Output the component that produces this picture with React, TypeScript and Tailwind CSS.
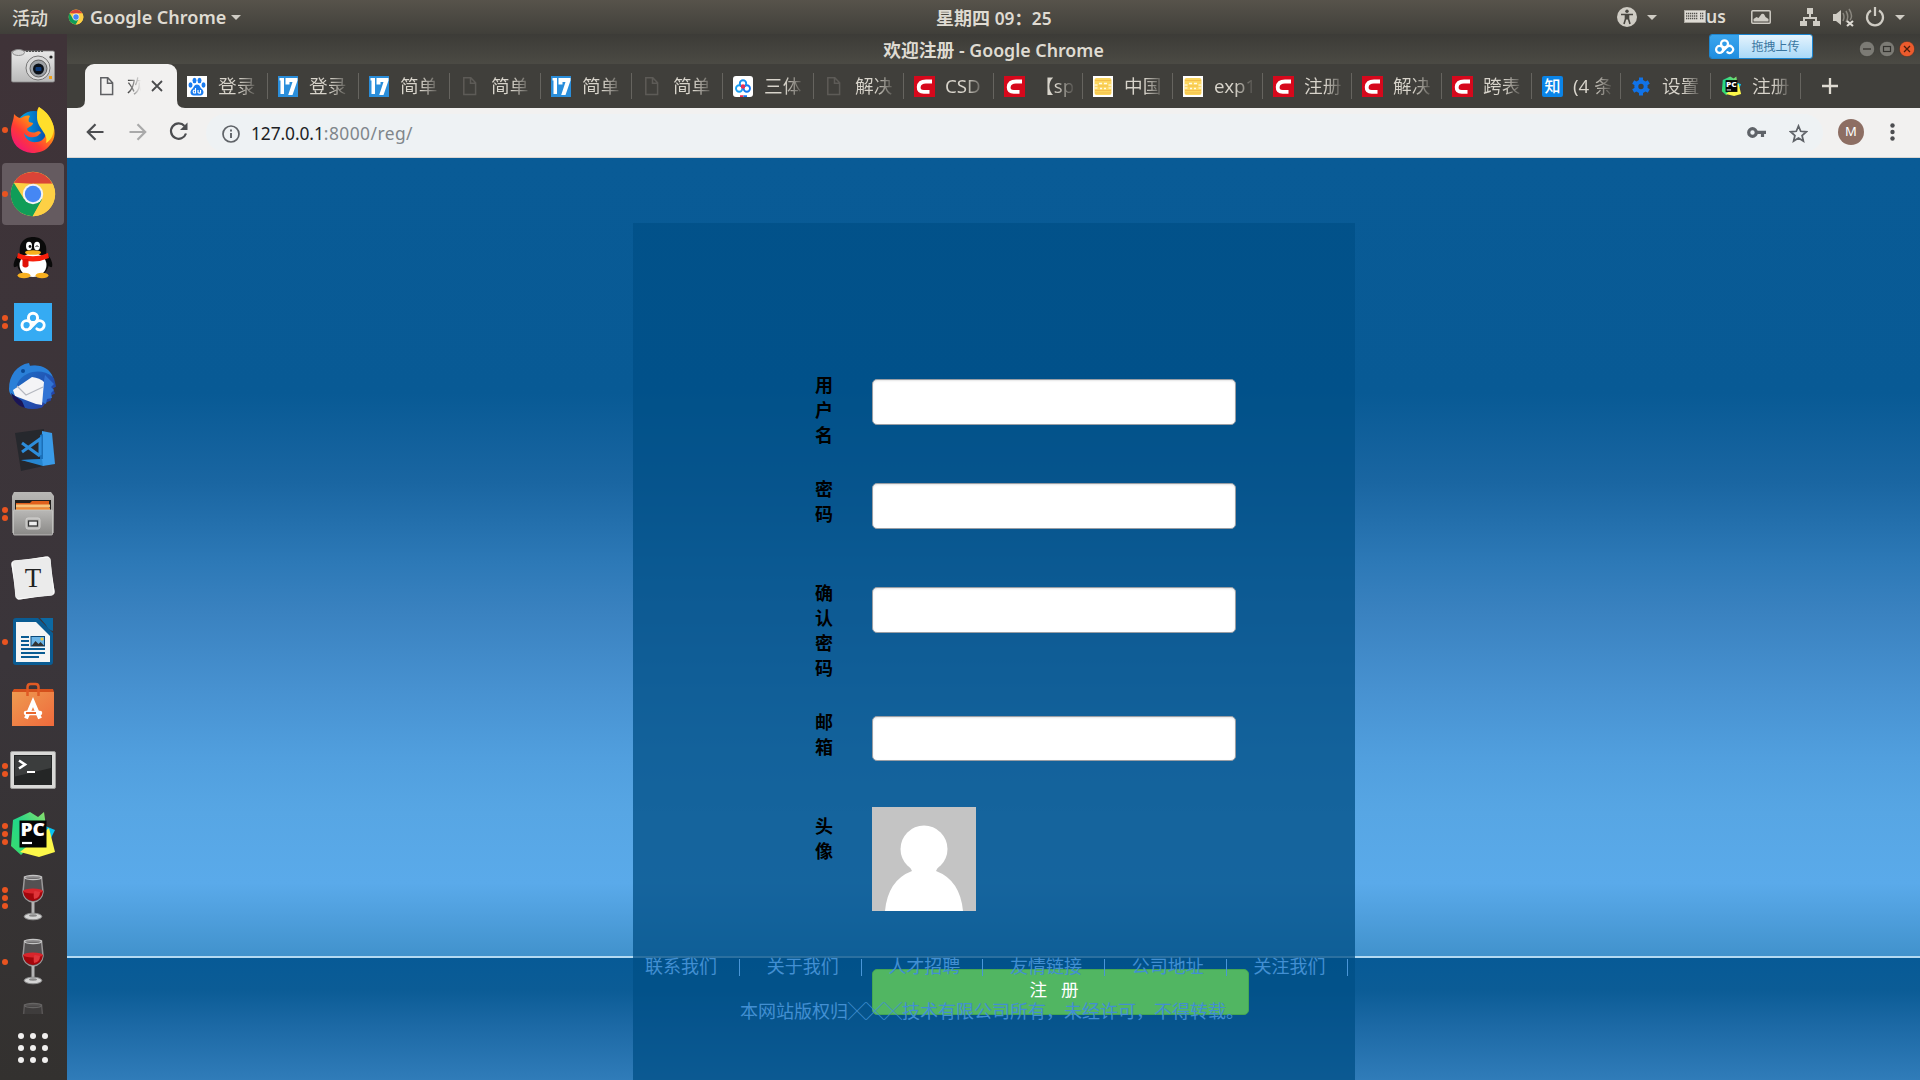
import React from 'react';

const UI = "font-['Noto_Sans','Noto_Sans_CJK_SC',sans-serif]";

/* ---------- small shared glyphs ---------- */

function Caret({ className = '' }: { className?: string }) {
  return (
    <svg className={'h-[5px] w-[10px] shrink-0 ' + className} viewBox="0 0 10 5">
      <path d="M0 0h10L5 5z" fill="#cfccc4" />
    </svg>
  );
}

function ChromeLogo({ className }: { className: string }) {
  return (
    <svg className={className} viewBox="0 0 48 48">
      <circle cx="24" cy="24" r="22.2" fill="#fdd045" />
      <path d="M4.8 12.8A22.2 22.2 0 0 1 43.4 13.8H24z" fill="#da4437" />
      <path d="M4.8 12.8A22.2 22.2 0 0 0 23.6 46.2L33 29.5 24 24 15 29z" fill="#109d58" />
      <path d="M24 46.2A22.2 22.2 0 0 0 43.6 13.8H24L33.5 29.3z" fill="#fdd045" />
      <circle cx="24" cy="24" r="10.2" fill="#f3f3f3" />
      <circle cx="24" cy="24" r="8.2" fill="#4587f4" />
    </svg>
  );
}

function Cloud({ className, color = '#fff' }: { className: string; color?: string }) {
  return (
    <svg className={className} viewBox="0 0 30 24" fill="none" stroke={color} strokeWidth="3.2" strokeLinecap="round">
      <circle cx="15" cy="7.5" r="5" />
      <circle cx="8" cy="15.5" r="5" />
      <path d="M11.5 19 18.6 12a5 5 0 1 1 .6 7.5" />
    </svg>
  );
}

/* ---------- dock ---------- */

function Camera() {
  return (
    <svg className="h-12 w-12" viewBox="0 0 48 48">
      <defs>
        <linearGradient id="cam" x1="0" y1="0" x2="0" y2="1">
          <stop offset="0" stopColor="#e9e9e9" />
          <stop offset="1" stopColor="#b9b9b9" />
        </linearGradient>
      </defs>
      <rect x="2.5" y="9" width="43" height="31" rx="1.5" fill="url(#cam)" stroke="#8d8d8d" strokeWidth=".8" />
      <path d="M17 9h17" stroke="#555" strokeWidth="2" strokeDasharray="2 1" />
      <ellipse cx="9.5" cy="10.5" rx="6" ry="3" fill="#d6d6d6" stroke="#8b8b8b" />
      <circle cx="29" cy="26" r="12" fill="#dadada" stroke="#777" />
      <circle cx="29.5" cy="26.5" r="8.5" fill="#9ea2a6" stroke="#5f5f5f" />
      <circle cx="29.5" cy="27" r="5.5" fill="#0a1018" />
      <rect x="26.5" y="25" width="6" height="4" rx="1" fill="#0d3a78" />
      <circle cx="42" cy="15" r="1.6" fill="#222" />
      <rect x="40" y="34" width="3" height="3" fill="#f0a018" />
    </svg>
  );
}

function Firefox() {
  return (
    <svg className="h-12 w-12" viewBox="0 0 48 48">
      <defs>
        <linearGradient id="ffa" x1="1" y1="0" x2="0.2" y2="1">
          <stop offset="0" stopColor="#ffe82c" />
          <stop offset=".4" stopColor="#ff9a10" />
          <stop offset=".7" stopColor="#ff3b35" />
          <stop offset="1" stopColor="#f2127c" />
        </linearGradient>
        <linearGradient id="ffb" x1="0" y1="0" x2="1" y2="0">
          <stop offset="0" stopColor="#00b4f0" />
          <stop offset="1" stopColor="#0a3aa0" />
        </linearGradient>
      </defs>
      <circle cx="25" cy="23" r="18" fill="url(#ffb)" />
      <path
        d="M5 8c2 2 4 4 7 4 3-2 6-3 9-2-1 2-2 4-1 6l4 1c0 3-5 4-6 6 1 4 7 4 9 3 2-1 4-1 5 1-2 1-3 4-7 4-5 1-8-1-10-4 1 6 6 10 13 9 7-1 10-7 9-13-1-6-9-9-9-16 0-3 1-5 2-6 3 3 9 6 12 13 5 9 5 19-1 25-4 6-11 8-18 8C10 46 2 37 2 25 2 18 5 14 5 8z"
        fill="url(#ffa)"
      />
      <path d="M30 1c7 4 14 12 15 22-1 8-4 12-8 14 3-10-9-14-9-26 0-4 1-8 2-10z" fill="#ffdf2b" />
    </svg>
  );
}

function Penguin() {
  return (
    <svg className="h-12 w-12" viewBox="0 0 48 48">
      <path d="M10 20c-5 5-6 11-5 13 2 1 5-3 5-3M38 20c5 5 6 11 5 13-2 1-5-3-5-3" fill="#0a0a0a" />
      <ellipse cx="24" cy="29" rx="16" ry="14" fill="#0a0a0a" />
      <path d="M11 20C9 7 17 3 24 3s15 4 13 17z" fill="#0a0a0a" />
      <ellipse cx="24" cy="31" rx="13.5" ry="12" fill="#fff" />
      <ellipse cx="15" cy="41.500" rx="6.500" ry="2.800" fill="#f8b01e" />
      <ellipse cx="33" cy="41.500" rx="6.500" ry="2.800" fill="#f8b01e" />
      <ellipse cx="20" cy="12" rx="3" ry="4.200" fill="#fff" />
      <ellipse cx="28" cy="12" rx="3" ry="4.200" fill="#fff" />
      <circle cx="21" cy="12.500" r="1.400" fill="#111" />
      <path d="M26.500 13q1.500-3 3 0" stroke="#111" fill="none" />
      <ellipse cx="24" cy="18.500" rx="8" ry="2.300" fill="#f8b01e" />
      <path d="M9 19q15 6.500 30 0l1 5q-16 7-32 0z" fill="#f8200c" />
      <path d="M13.500 25h6v7q-3 3-6 0z" fill="#e01006" />
    </svg>
  );
}

function BaiduDisk() {
  return (
    <div className="flex h-[38px] w-[38px] items-center justify-center bg-[#35abf3]">
      <Cloud className="h-[22px] w-[28px]" />
    </div>
  );
}

function Thunderbird() {
  return (
    <svg className="h-12 w-12" viewBox="0 0 48 48">
      <defs>
        <linearGradient id="tb" x1="0" y1="0" x2="1" y2="1">
          <stop offset="0" stopColor="#1c78d0" />
          <stop offset="1" stopColor="#26389c" />
        </linearGradient>
      </defs>
      <path d="M25 3.500q14 1 20 13l2 8-3 2 2 5-4 2 0 5-5 2-4 5q-10 3-18 0Q1 38 1 24 3 8 17 4z" fill="url(#tb)" />
      <path d="M0 27C0 13 8 3 20 1l1 3c11-2 19 2 23 11-8-6-17-7-26-3C9 16 5 25 7 36 2 34 0 31 0 27z" fill="#2a80d8" />
      <path d="m36 13 9 9-3 3 3 3-3 3 1 5-5 1-1 5-6-3z" fill="#3173d4" />
      <path d="M4 28 23 15q8 1 12 5l-2 23-6-1L6 34z" fill="#f4f4f6" />
      <path d="m8 24 9 9 17-8" fill="none" stroke="#b5b8c0" strokeWidth="1.200" />
      <path d="M2 31l11 8 3 7C9 44 4 39 2 31z" fill="#1a1556" />
      <circle cx="14" cy="9" r="2" fill="#0a4a98" />
    </svg>
  );
}

function VSCode() {
  return (
    <svg className="h-12 w-12" viewBox="0 0 48 48">
      <path d="M6 7 35 3v34l9 1-32 7z" fill="#26282d" />
      <path d="M33 5l10 2 3 31-12 2-2-2z" fill="#3a9be8" />
      <path d="M12 34l22-1V8l-3 1v25l1 4z" fill="#1b6fb8" />
      <path d="m12 34 21-1 1 7z" fill="#2686d0" />
      <path d="m13 17 18 13M13 26l18-13v16" fill="none" stroke="#2d8ddb" strokeWidth="3" />
    </svg>
  );
}

function Files() {
  return (
    <svg className="h-12 w-12" viewBox="0 0 48 48">
      <defs>
        <linearGradient id="fl" x1="0" y1="0" x2="0" y2="1">
          <stop offset="0" stopColor="#b9b8b6" />
          <stop offset="1" stopColor="#8a8987" />
        </linearGradient>
      </defs>
      <path d="M5 2h37l3 4v37H3V6z" fill="url(#fl)" />
      <rect x="6" y="10" width="36" height="12" fill="#22201e" />
      <path d="M7 13h14l2-2h17v10H7z" fill="#e0601c" />
      <path d="M7 14.500h34v3H7z" fill="#f6c37a" />
      <path d="M7 18h34v4H7z" fill="#f08a32" />
      <rect x="4.500" y="20" width="39" height="25" rx="1" fill="url(#fl)" stroke="#c9c8c6" strokeWidth=".8" />
      <rect x="17" y="28" width="14" height="11" rx="2" fill="#bdbcba" stroke="#d3d2d0" />
      <rect x="19.500" y="31" width="9" height="5" fill="#eee" stroke="#333" strokeWidth="1.300" />
    </svg>
  );
}

function Typora() {
  return (
    <svg className="h-12 w-12" viewBox="0 0 48 48">
      <rect x="5" y="5" width="38" height="38" rx="3" fill="#d9d9d9" transform="rotate(-10 24 24)" />
      <rect x="4.500" y="4.500" width="39" height="39" rx="3" fill="#fafafa" transform="rotate(-8 24 24)" />
      <rect x="5" y="5" width="38" height="38" rx="2" fill="#ebebeb" transform="rotate(-4 24 24)" />
      <text x="24" y="33" textAnchor="middle" fontFamily="Liberation Serif" fontSize="27" fill="#222">T</text>
    </svg>
  );
}

function Writer() {
  return (
    <svg className="h-12 w-12" viewBox="0 0 48 48">
      <path d="M7 0h22l15 15v29q0 3-3 3H7q-3 0-3-3V3q0-3 3-3z" fill="#0a5c93" />
      <path d="M31 0h13v13q-5-1-7-6z" fill="#0c69a3" />
      <path d="M7 4h20l14 14v26H7z" fill="#f5f5f5" />
      <path d="M12 19h8M12 23h8M12 27h8M12 31h24M12 35h24M12 39h18" stroke="#0a5c93" strokeWidth="2" />
      <rect x="22" y="18.500" width="13.500" height="9.500" fill="#6db5e6" stroke="#0a4a7c" />
      <path d="M22.500 28l4-5 3 3 2-2 4 4z" fill="#333" />
      <circle cx="33" cy="21" r="1.500" fill="#f6c83a" />
    </svg>
  );
}

function Software() {
  return (
    <svg className="h-12 w-12" viewBox="0 0 48 48">
      <defs>
        <linearGradient id="sw" x1="0" y1="0" x2="1" y2="1">
          <stop offset="0" stopColor="#ee9a50" />
          <stop offset="1" stopColor="#ef6a3c" />
        </linearGradient>
      </defs>
      <path d="M3 10h42v34H3z" fill="url(#sw)" />
      <path d="M3 10h42l-1-3H5z" fill="#d4501c" />
      <path d="M18.500 14V5q0-3 3-3h5q3 0 3 3v9" fill="none" stroke="#e05a24" strokeWidth="2.500" />
      <path d="M17 36.500 24 20l7 16.500" fill="none" stroke="#fff" strokeWidth="4" />
      <path d="M17 31h14" stroke="#fff" strokeWidth="4.500" strokeLinecap="round" />
      <path d="M17 31h10" stroke="#e9682f" strokeWidth="2" />
    </svg>
  );
}

function Terminal() {
  return (
    <svg className="h-12 w-12" viewBox="0 0 48 48">
      <rect x="1.500" y="5.500" width="45" height="37" rx="1.500" fill="#d9d9d7" stroke="#9c9c9a" />
      <rect x="5" y="9" width="38" height="30" fill="#242626" />
      <path d="M6 10h36v12L6 30.500z" fill="#3b3d3d" />
      <path d="m10 14.500 6 4-6 4" fill="none" stroke="#fff" strokeWidth="2.600" />
      <path d="M18 26h8" stroke="#fff" strokeWidth="2" />
    </svg>
  );
}

function PyCharm({ className }: { className: string }) {
  return (
    <svg className={className} viewBox="0 0 48 48">
      <defs>
        <linearGradient id="pc" x1="1" y1="0" x2="0" y2="1">
          <stop offset="0" stopColor="#8ee06a" />
          <stop offset=".5" stopColor="#21d789" />
          <stop offset="1" stopColor="#3ddb6b" />
        </linearGradient>
      </defs>
      <path d="M29 13 46 20l-6 12-12-4z" fill="#07c3f2" />
      <path d="M4 10 21 2l8 5 6-5 2 14-20 24-5 5L2 36z" fill="url(#pc)" />
      <path d="M40 18l6 24-16 5-19-5 10-8z" fill="#fcf84a" />
      <rect x="10.500" y="10.500" width="27" height="27" fill="#050505" />
      <text
        x="11.500"
        y="25.500"
        fontFamily="Open Sans"
        fontWeight="800"
        fontSize="17"
        textLength="24.500"
        lengthAdjust="spacingAndGlyphs"
        fill="#fff"
      >
        PC
      </text>
      <path d="M13 33h10" stroke="#fff" strokeWidth="2.200" />
    </svg>
  );
}

function Wine() {
  return (
    <svg className="h-12 w-12" viewBox="0 0 48 48">
      <path d="M15.500 3 14 18q1 9 10 10 9-1 10-10L32.500 3z" fill="#6c6a6b" fillOpacity=".55" stroke="#9b9899" strokeWidth="1.500" />
      <path d="M14 17h20q-1 9-10 10-9-1-10-10z" fill="#a3060c" />
      <ellipse cx="24" cy="17" rx="9.800" ry="2.500" fill="#d8252b" />
      <path d="M26 17q-2 0-1 8 6-1 6-7z" fill="#e0353a" />
      <ellipse cx="24" cy="3.500" rx="8.500" ry="2" fill="none" stroke="#c4c4c4" strokeWidth="1.300" />
      <path d="M24 28v12" stroke="#b4b4b4" strokeWidth="3" />
      <ellipse cx="24" cy="42.500" rx="8.800" ry="3.300" fill="#d5d5d5" stroke="#8e8e8e" />
      <ellipse cx="24" cy="41.500" rx="4" ry="1.200" fill="#888" />
    </svg>
  );
}

const dock: { icon: React.ReactNode; dots: number; active?: boolean }[] = [
  { icon: <Camera />, dots: 0 },
  { icon: <Firefox />, dots: 1 },
  { icon: <ChromeLogo className="h-12 w-12" />, dots: 1, active: true },
  { icon: <Penguin />, dots: 0 },
  { icon: <BaiduDisk />, dots: 2 },
  { icon: <Thunderbird />, dots: 0 },
  { icon: <VSCode />, dots: 0 },
  { icon: <Files />, dots: 2 },
  { icon: <Typora />, dots: 0 },
  { icon: <Writer />, dots: 1 },
  { icon: <Software />, dots: 0 },
  { icon: <Terminal />, dots: 2 },
  { icon: <PyCharm className="h-12 w-12" />, dots: 3 },
  { icon: <Wine />, dots: 3 },
  { icon: <Wine />, dots: 1 },
];

function Dock() {
  return (
    <aside className="flex w-[67px] shrink-0 flex-col bg-linear-to-b from-[#3f3338] via-[#3a353a] via-60% to-[#33312f]">
      {dock.map((d, i) => (
        <div key={i} className="flex h-16 shrink-0 items-center">
          <div
            className={
              'ml-[2px] flex h-[62px] w-[62px] items-center justify-center rounded-[4px] ' +
              (d.active ? 'bg-[#655b60]' : '')
            }
          >
            <div className="flex w-0 flex-col items-start gap-[2px]">
              {Array.from({ length: d.dots }, (_, k) => (
                <span key={k} className="-ml-[7px] h-[6px] w-[6px] rounded-full bg-[#e95420]" />
              ))}
            </div>
            <div className="flex h-12 w-12 items-center justify-center">{d.icon}</div>
          </div>
        </div>
      ))}
      <div className="h-[20px] overflow-hidden pl-[9px] pt-[8px] opacity-35">
        <Wine />
      </div>
      <div className="ml-[18px] mt-[19px] grid w-[30px] grid-cols-3 gap-[6px] self-start">
        {Array.from({ length: 9 }, (_, i) => (
          <span key={i} className="h-[6px] w-[6px] rounded-full bg-[#f1f0ef]" />
        ))}
      </div>
    </aside>
  );
}

/* ---------- top bar ---------- */

function TopBar() {
  return (
    <header className="flex h-[34px] shrink-0 items-center bg-linear-to-b from-[#57534b] to-[#403f3a] text-[18px] font-semibold leading-none text-[#dfdbd2]">
      <span className="ml-[12px] mt-[2px] w-[56px] font-medium">活动</span>
      <ChromeLogo className="h-4 w-4" />
      <span className="ml-[6px] w-[135px] whitespace-nowrap text-[18px]">Google Chrome</span>
      <Caret className="ml-[6px]" />
      <span className="ml-[695px] mt-[2px] w-[117px] whitespace-nowrap">
        星期四{' '}
        <span className="text-[17.300px]">
          09<span className="font-['Noto_Sans_CJK_TC']">：</span>25
        </span>
      </span>
      <svg className="ml-[564px] h-5 w-5" viewBox="0 0 20 20">
        <circle cx="10" cy="10" r="10" fill="#cfccc4" />
        <circle cx="10" cy="4.300" r="1.700" fill="#484640" />
        <path d="M4 7.500h12M8.500 8v4L7 17M11.500 8v4l1.500 5" stroke="#484640" strokeWidth="1.600" fill="none" />
        <path d="M8 7.500h4v5H8z" fill="#484640" />
      </svg>
      <Caret className="ml-[10px]" />
      <svg className="ml-[27px] h-[14px] w-[22px]" viewBox="0 0 22 14">
        <rect x=".5" y=".5" width="21" height="12" fill="#dedbd4" stroke="#aaa79f" />
        <path d="M2 3.500h12M2 6h12M2 8.500h12M16 3.500h4M16 6h4M16 8.500h4" stroke="#55534e" strokeWidth="1.500" strokeDasharray="1.300 .7" />
      </svg>
      <span className="w-[19px] text-[17.500px]">us</span>
      <svg className="ml-[26px] h-[14px] w-[20px]" viewBox="0 0 20 14">
        <rect x=".8" y=".8" width="18.400" height="12.400" rx="1" fill="none" stroke="#cfccc4" strokeWidth="1.500" />
        <path d="M2.500 11.500V9l3-2 2 1 3-4q2-1 3 1l1 2 3 2v2.500z" fill="#cfccc4" />
      </svg>
      <svg className="ml-[29px] h-5 w-5" viewBox="0 0 20 20" fill="#cfccc4">
        <path d="M7 1h6v6h-2v3h6v4h3v5h-7v-5h2v-2H5v2h2v5H0v-5h3v-4h6V7H7z" />
      </svg>
      <svg className="ml-[13px] h-5 w-[21px]" viewBox="0 0 21 20">
        <path d="M0 7h3l5-4v15l-5-4H0z" fill="#cfccc4" />
        <path d="M10 6q2 4 0 8M13 4q3.500 6 0 11M16 2q4.500 7 1 11" stroke="#8a877f" strokeWidth="1.500" fill="none" />
        <path d="m14 14 6 5m0-5-6 5" stroke="#dedbd4" strokeWidth="2.200" />
      </svg>
      <svg className="ml-[11px] h-5 w-5" viewBox="0 0 20 20" fill="none" stroke="#cfccc4" strokeWidth="2.200">
        <path d="M6 3.500a8 8 0 1 0 8 0M10 0v9" />
      </svg>
      <Caret className="ml-[10px]" />
    </header>
  );
}

function TitleBar() {
  return (
    <div className="grid h-[30px] shrink-0 grid-cols-[1fr_auto_1fr] bg-linear-to-b from-[#3c3b37] to-[#4b4a44]">
      <span />
      <span className="flex items-center whitespace-pre text-[17.800px] font-semibold leading-none text-[#dfdbd2]">
        <span className="pt-[3px]">欢迎注册 - Google Chrome</span>
      </span>
      <div className="flex justify-end">
        <div className="mr-[46px] flex h-[25px] w-[104px] overflow-hidden rounded-[3px] border border-[#1c86d1]">
          <div className="flex w-[29px] items-center justify-center bg-linear-to-b from-[#3aa5ee] to-[#1f8ee0]">
            <Cloud className="h-[18px] w-[21px]" />
          </div>
          <div className="flex flex-1 items-center justify-center bg-linear-to-b from-[#e4f3fd] to-[#a9d9f8] text-[12px] text-[#3a76a0]">
            拖拽上传
          </div>
        </div>
        <div className="mr-[5px] mt-[7px] flex gap-1">
          <svg className="h-4 w-4" viewBox="0 0 16 16">
            <circle cx="8" cy="8" r="7.700" fill="#7c7b75" stroke="#33322e" strokeWidth=".6" />
            <path d="M4 8h8" stroke="#33322e" strokeWidth="1.300" />
          </svg>
          <svg className="h-4 w-4" viewBox="0 0 16 16">
            <circle cx="8" cy="8" r="7.700" fill="#7c7b75" stroke="#33322e" strokeWidth=".6" />
            <rect x="4.500" y="5.500" width="7" height="5" fill="none" stroke="#33322e" strokeWidth="1.200" />
          </svg>
          <svg className="h-4 w-4" viewBox="0 0 16 16">
            <circle cx="8" cy="8" r="7.700" fill="#ec5b2d" stroke="#33322e" strokeWidth=".6" />
            <path d="m5 5 6 6m0-6-6 6" stroke="#4a1d0c" strokeWidth="1.300" />
          </svg>
        </div>
      </div>
    </div>
  );
}

/* ---------- tabs ---------- */

function PageIcon({ color }: { color: string }) {
  return (
    <svg className="h-[21px] w-5" viewBox="0 0 20 21" fill="none" stroke={color} strokeWidth="1.500">
      <path d="M3.800 1.800h7l4.800 5v11.800H3.800zM10.500 2v5.200h5" />
    </svg>
  );
}

function Paw() {
  return (
    <svg className="h-[21px] w-5 bg-white" viewBox="0 0 20 21" fill="#1a7cf0">
      <ellipse cx="3.500" cy="9" rx="2" ry="2.700" />
      <ellipse cx="7.500" cy="4.500" rx="2" ry="2.700" />
      <ellipse cx="12.500" cy="4.500" rx="2" ry="2.700" />
      <ellipse cx="16.500" cy="9" rx="2" ry="2.700" />
      <path d="M10 8.500c3 0 3 3 5 4.500 3 3 1 6.500-1.500 6.500h-7C4 19.500 2 16 5 13c2-1.500 2-4.500 5-4.500z" />
      <path d="M8.500 12v5H6.800q-1.300-1.300 0-2.800h1.700M11 14v2.500q1 1 2.500.5v-3" fill="none" stroke="#fff" strokeWidth="1.100" />
    </svg>
  );
}

function Seventeen() {
  return (
    <svg className="h-[21px] w-5 bg-[#2a8edb]" viewBox="0 0 20 21" fill="#fff">
      <path d="M1.500 2H6v16H2.500V4.500h-1z" />
      <path d="M7.500 2h12v2.500L14.500 19h-4.300L14.500 6h-3v2.500h-4z" />
    </svg>
  );
}

function CIcon() {
  return (
    <svg className="h-[21px] w-[21px] bg-[#d6081c]" viewBox="0 0 21 21" fill="none" stroke="#fff" strokeWidth="3.800">
      <path d="M18 5.500h-6Q5.200 5.500 4.700 11q-.3 4.800 5 4.800h5.800" />
    </svg>
  );
}

function Smile() {
  return (
    <svg className="h-[21px] w-5 bg-white" viewBox="0 0 20 21">
      <rect x="1.500" y="2" width="17" height="17" rx="2" fill="#fcd65e" />
      <path d="M2 4.500h16M2 14.500h16M2 17h16" stroke="#f3bd4a" strokeWidth="1" />
      <path d="M1.500 9h3M15.500 9h3M1.500 12h3M15.500 12h3" stroke="#fff" strokeWidth="1" />
      <path d="M6 7.500h3M11 7.500h3M7 12.500h2M11 12.500h2" stroke="#fffbe8" strokeWidth="1.500" />
      <path d="M5 10h10" stroke="#f3bd4a" strokeWidth="1" />
    </svg>
  );
}

function BaiduYun() {
  return (
    <svg className="h-[21px] w-5 rounded-[3px] bg-white" viewBox="0 0 20 21" fill="none" strokeWidth="1.900">
      <circle cx="6.200" cy="12.500" r="3.200" stroke="#1aa0f4" />
      <circle cx="13.800" cy="12.500" r="3.200" stroke="#1576f0" />
      <circle cx="10" cy="7.500" r="3.200" stroke="#1790f2" />
      <circle cx="10" cy="10.600" r="1.300" stroke="#f02a50" />
      <path d="M7 20.300h3.500" stroke="#f02a50" />
      <path d="M10.500 20.300H14" stroke="#1576f0" />
    </svg>
  );
}

function Zhi() {
  return (
    <span className="flex h-[21px] w-[21px] items-center justify-center rounded-[2px] bg-[#0a84e8] text-[16px] font-medium leading-none text-white">
      知
    </span>
  );
}

function Gear() {
  return (
    <svg className="h-[21px] w-5" viewBox="0 0 20 21">
      <circle cx="10" cy="10.500" r="4.700" fill="none" stroke="#1173e8" strokeWidth="4" />
      <path
        d="M10 1.500v4M10 15.500v4M2.200 6l3.500 2M14.300 13l3.500 2M2.200 15l3.500-2M14.300 8l3.500-2"
        stroke="#1173e8"
        strokeWidth="4"
      />
    </svg>
  );
}

const dim = <PageIcon color="#5d5b57" />;
const tabs: [React.ReactNode, string, string][] = [
  [<Paw />, '登录', 'w-[91px]'],
  [<Seventeen />, '登录', 'w-[91px]'],
  [<Seventeen />, '简单', 'w-[91px]'],
  [dim, '简单', 'w-[91px]'],
  [<Seventeen />, '简单', 'w-[91px]'],
  [dim, '简单', 'w-[91px]'],
  [<BaiduYun />, '三体', 'w-[91px]'],
  [dim, '解决', 'w-[90px]'],
  [<CIcon />, 'CSD', 'w-[90px]'],
  [<CIcon />, '【sp', 'w-[89px]'],
  [<Smile />, '中国', 'w-[90px]'],
  [<Smile />, 'exp1', 'w-[90px]'],
  [<CIcon />, '注册', 'w-[89px]'],
  [<CIcon />, '解决', 'w-[90px]'],
  [<CIcon />, '跨表', 'w-[90px]'],
  [<Zhi />, '(4 条', 'w-[89px]'],
  [<Gear />, '设置', 'w-[90px]'],
  [<PyCharm className="h-[22px] w-[21px]" />, '注册', 'w-[90px]'],
];

function TabStrip() {
  return (
    <div className="flex h-11 shrink-0 items-center bg-[#403f3b]">
      <div className="relative ml-[18px] flex h-11 w-[92px] items-center rounded-t-[9px] bg-[#f2f1f0] pl-3">
        <svg className="absolute -left-2 bottom-0 h-2 w-2" viewBox="0 0 8 8">
          <path d="M8 0v8H0q8 0 8-8z" fill="#f2f1f0" />
        </svg>
        <svg className="absolute -right-2 bottom-0 h-2 w-2" viewBox="0 0 8 8">
          <path d="M0 0v8h8Q0 8 0 0z" fill="#f2f1f0" />
        </svg>
        <PageIcon color="#5f6063" />
        <span className="ml-[10px] w-[14px] overflow-hidden whitespace-nowrap bg-linear-to-r from-[#333] to-transparent bg-clip-text text-[18.500px] leading-6 text-transparent">
          欢
        </span>
        <svg className="ml-[10px] h-3 w-3" viewBox="0 0 12 12">
          <path d="m1 1 10 10m0-10L1 11" stroke="#4a4b4d" strokeWidth="1.800" />
        </svg>
      </div>
      {tabs.map(([icon, label, w], i) => (
        <div key={i} className={'flex h-[26px] items-center border-r border-[#66645f] pl-[10px] ' + w}>
          <span className="flex w-[21px] shrink-0">{icon}</span>
          <span className="ml-[10px] w-[38px] overflow-hidden whitespace-nowrap bg-linear-to-r from-[#d8d4cb] from-55% to-[#d8d4cb]/15 bg-clip-text text-[18.700px] leading-6 text-transparent">
            {label}
          </span>
        </div>
      ))}
      <svg className="ml-[21px] h-4 w-4" viewBox="0 0 16 16">
        <path d="M8 0v16M0 8h16" stroke="#dfdbd2" strokeWidth="2.300" />
      </svg>
    </div>
  );
}

/* ---------- toolbar ---------- */

function Toolbar() {
  return (
    <div className="flex h-[50px] shrink-0 items-center border-b border-[#d8d5d2] bg-[#f2f1f0]">
      <svg className="-mt-[2px] ml-[19px] h-[18px] w-[18px]" viewBox="0 0 18 18" fill="none" stroke="#4c4d50" strokeWidth="2.200">
        <path d="M17.500 9H2M9.500 1.200 1.800 9l7.700 7.800" />
      </svg>
      <svg className="-mt-[2px] ml-[25px] h-[18px] w-[18px]" viewBox="0 0 18 18" fill="none" stroke="#a9a9a9" strokeWidth="2.200">
        <path d="M.5 9H16M8.500 1.200 16.200 9l-7.700 7.800" />
      </svg>
      <svg className="-mt-[2px] ml-[22px] h-[19px] w-[19px]" viewBox="0 0 19 19" fill="none" stroke="#4c4d50" strokeWidth="2.200">
        <path d="M15.500 4A7.700 7.700 0 1 0 17 11.500" />
        <path d="M18.500.5V8H11z" fill="#4c4d50" stroke="none" />
      </svg>
      <div className="ml-[18px] flex h-[38px] w-[1617px] items-center rounded-full bg-[#eef2f4] pl-[16px]">
        <svg className="mt-[2px] h-[18px] w-[18px]" viewBox="0 0 18 18" fill="none" stroke="#5f6368">
          <circle cx="9" cy="9" r="8" strokeWidth="1.700" />
          <path d="M9 8v5M9 4.500v2" strokeWidth="1.900" />
        </svg>
        <span className="ml-[11px] mt-[2px] whitespace-nowrap text-[17.400px] leading-none tracking-[-0.100px] text-[#202124]">
          127.0.0.1<span className="tracking-[0.450px] text-[#80868b]">:8000/reg/</span>
        </span>
        <svg className="ml-auto h-[11px] w-[19px]" viewBox="0 0 19 11">
          <circle cx="5.500" cy="5.500" r="3.800" fill="none" stroke="#5f6368" strokeWidth="3.200" />
          <path d="M9 5.300h10M15.500 5v5" stroke="#5f6368" strokeWidth="3.200" />
        </svg>
        <svg className="ml-[23px] mr-[15px] mt-px h-[19px] w-[19px]" viewBox="0 0 24 24">
          <path
            d="m12 2.500 2.800 6.700 7.200.6-5.500 4.700 1.700 7.100-6.200-3.800-6.200 3.800 1.700-7.100L2 9.800l7.200-.6z"
            fill="none"
            stroke="#5f6368"
            strokeWidth="2.200"
          />
        </svg>
      </div>
      <span className="-mt-px ml-[15px] flex h-[26px] w-[26px] items-center justify-center rounded-full bg-[#8d6e63] text-[13px] text-white">
        M
      </span>
      <svg className="-mt-[2px] ml-[26px] h-[18px] w-[5px]" viewBox="0 0 5 18" fill="#4c4d50">
        <circle cx="2.500" cy="2.500" r="2.200" />
        <circle cx="2.500" cy="9" r="2.200" />
        <circle cx="2.500" cy="15.500" r="2.200" />
      </svg>
    </div>
  );
}

/* ---------- registration page ---------- */

function Field({ label, height, children }: { label: string; height: string; children: React.ReactNode }) {
  return (
    <div className={'flex items-start ' + height}>
      <label className="w-[57px] shrink-0 text-[18px] font-bold leading-[25px] text-black">
        <span className="block w-[18px] break-all">{label}</span>
      </label>
      {children}
    </div>
  );
}

const inputBox =
  'mt-[6px] w-[364px] rounded-[5px] border border-[#999ea5] bg-white shadow-[inset_0_1px_2px_rgba(0,0,0,0.1)] outline-none';

function Avatar() {
  return (
    <svg className="-mt-[7px] h-[104px] w-[104px] bg-[#c4c4c4]" viewBox="0 0 104 104" fill="#fff">
      <circle cx="52" cy="42" r="23.500" />
      <path d="M13 104q3-31 27-40-1-3-5-7h34q-4 4-5 7 24 9 27 40z" />
    </svg>
  );
}

const links = ['联系我们', '关于我们', '人才招聘', '友情链接', '公司地址', '关注我们'];

function Page() {
  return (
    <main className="relative flex flex-1 flex-col overflow-hidden">
      <div className="h-[798px] shrink-0 bg-[linear-gradient(to_bottom,#095b96_0px,#085a95_235px,#1a66a2_325px,#2d79b7_405px,#3a82c0_455px,#4791d0_530px,#519fde_600px,#57a6e4_655px,#5aaaea_725px,#4f9fdd_758px,#4192cc_798px)]" />
      <div className="h-[2px] shrink-0 bg-[#b4daf2]" />
      <div className="flex-1 bg-[linear-gradient(to_bottom,#075a96_0px,#0b5c96_32px,#1b68a4_65px,#307cb9_122px)]" />

      <form className="absolute left-[566px] top-[65px] h-[857px] w-[722px] bg-[#004f86]/76 pl-[182px] pt-[150px]">
        <Field label="用户名" height="h-[104px]">
          <input className={inputBox + ' h-[46px]'} />
        </Field>
        <Field label="密码" height="h-[104px]">
          <input className={inputBox + ' h-[46px]'} />
        </Field>
        <Field label="确认密码" height="h-[129px]">
          <input className={inputBox + ' h-[46px]'} />
        </Field>
        <Field label="邮箱" height="h-[104px]">
          <input className={inputBox + ' h-[45px]'} />
        </Field>
        <Field label="头像" height="h-[155px]">
          <Avatar />
        </Field>
        <button
          type="button"
          className="ml-[57px] flex h-[46px] w-[377px] items-center justify-center gap-[14px] rounded-[5px] border border-[#44a653] bg-[#51b662] pb-[5px] pr-[13px] text-[17.600px] text-white"
        >
          <span>注</span>
          <span>册</span>
        </button>
      </form>

      <footer className="absolute left-[566px] top-[795px] w-[722px] text-[18px] text-[#428fd2]">
        <div className="flex h-[25px] items-center pl-[12px]">
          {links.map((l) => (
            <div key={l} className="flex w-[121.700px] shrink-0 items-center leading-none">
              <span>{l}</span>
              <span className="ml-[22px] mt-[3px] h-[17px] w-px bg-[#4a96d8]" />
            </div>
          ))}
        </div>
        <p className="mt-[20px] whitespace-nowrap pl-[107px] leading-[25px]">
          本网站版权归<span className="font-['Noto_Sans_CJK_SC']">╳╳╳</span>技术有限公司所有，未经许可，不得转载。
        </p>
      </footer>
    </main>
  );
}

export default function App() {
  return (
    <div lang="zh-CN" className={'flex h-[1080px] w-[1920px] flex-col overflow-hidden ' + UI}>
      <TopBar />
      <div className="flex min-h-0 flex-1">
        <Dock />
        <div className="flex min-w-0 flex-1 flex-col">
          <TitleBar />
          <TabStrip />
          <Toolbar />
          <Page />
        </div>
      </div>
    </div>
  );
}
